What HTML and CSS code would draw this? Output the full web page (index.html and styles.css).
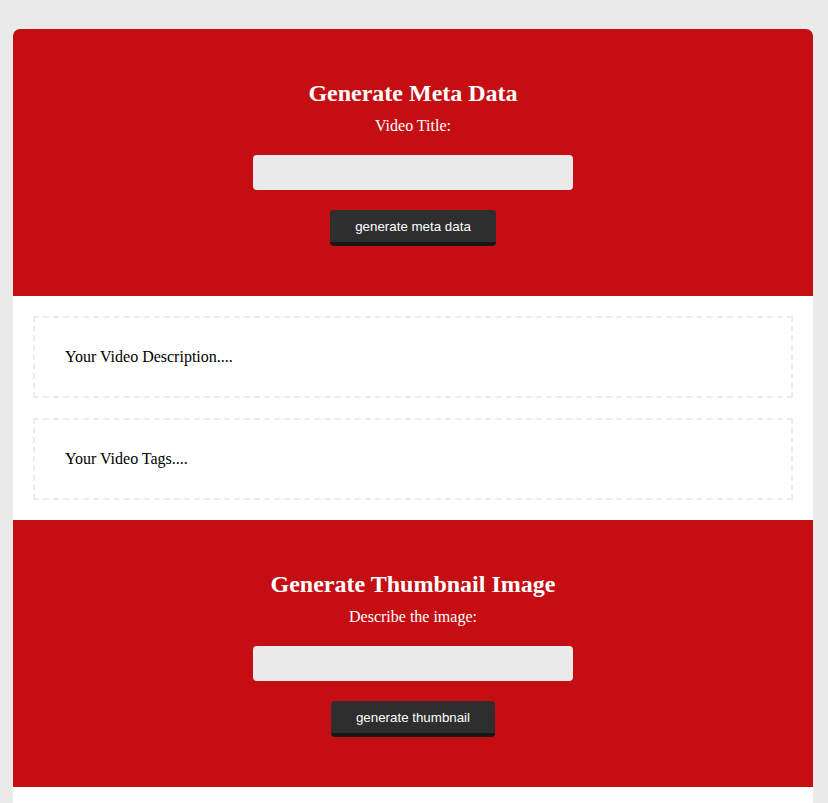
FILE: index.html
```html
<!DOCTYPE html>
<html lang="en">
<head>
<meta charset="utf-8">
<title>YouTube Meta Data Generator</title>
<link rel="stylesheet" href="styles.css">
</head>
<body>
  <div class="container">
    <section class="panel">
      <h2 class="panel-title">Generate Meta Data</h2>
      <label class="panel-label" for="title">Video Title:</label>
      <input class="panel-input" id="title" type="text">
      <button class="panel-button" type="button">generate meta data</button>
    </section>
    <section class="results">
      <div class="result-box">Your Video Description....</div>
      <div class="result-box">Your Video Tags....</div>
    </section>
    <section class="panel">
      <h2 class="panel-title">Generate Thumbnail Image</h2>
      <label class="panel-label" for="image">Describe the image:</label>
      <input class="panel-input" id="image" type="text">
      <button class="panel-button" type="button">generate thumbnail</button>
    </section>
    <section class="results tail"></section>
  </div>
</body>
</html>
```

FILE: styles.css
```css
html, body {
  margin: 0;
  padding: 0;
}
body {
  background: #eaeaea;
  font-family: "Liberation Serif", "Times New Roman", serif;
  font-size: 16px;
}
.container {
  width: 800px;
  margin: 29px 0 0 13px;
  background: #ffffff;
  border-radius: 7px 7px 0 0;
  overflow: hidden;
}
.panel {
  background: #c40e12;
  color: #ffffff;
  padding: 51px 20px 50px;
  display: flex;
  flex-direction: column;
  align-items: center;
}
.panel-title {
  margin: 0 0 10px;
  font-size: 24px;
  font-weight: bold;
  line-height: normal;
}
.panel-label {
  display: block;
  margin-bottom: 20px;
  line-height: normal;
}
.panel-input {
  width: 320px;
  box-sizing: border-box;
  height: 35px;
  padding: 10px;
  border: none;
  border-radius: 4px;
  background: #eaeaea;
  margin: 0 0 20px;
  font-family: "Liberation Sans", Arial, sans-serif;
  font-size: 13.333px;
}
.panel-button {
  font-family: "Liberation Sans", Arial, sans-serif;
  font-size: 13.333px;
  color: #ffffff;
  background: #2e2e2e;
  border: none;
  border-bottom: 4px solid #171717;
  border-radius: 4px;
  padding: 0 25px;
  height: 36px;
  margin: 0;
  cursor: pointer;
}
.results {
  background: #ffffff;
  padding: 20px;
  display: flex;
  flex-direction: column;
  gap: 20px;
}
.result-box {
  border: 2px dashed #ececec;
  padding: 30px;
  color: #000000;
  line-height: normal;
}
.tail {
  height: 16px;
  padding: 0;
}
```
